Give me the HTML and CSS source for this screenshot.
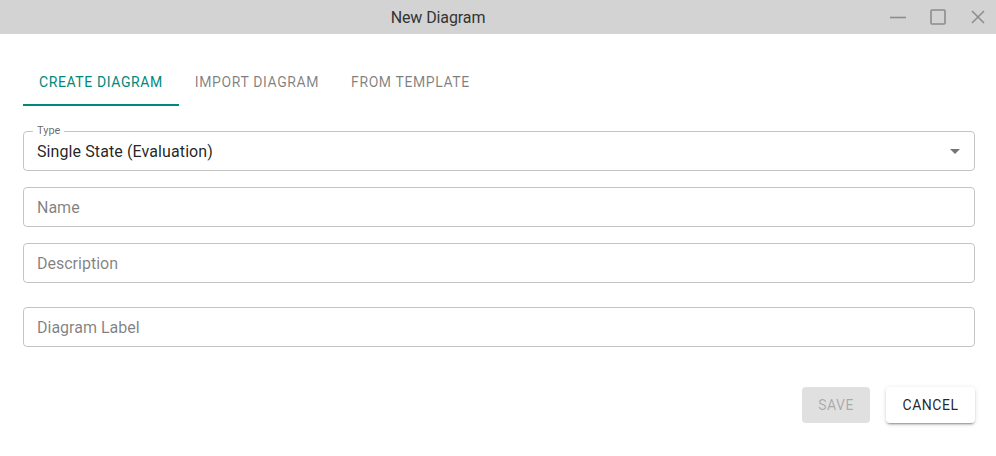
FILE: index.html
```html
<!DOCTYPE html>
<html>
<head>
<meta charset="utf-8">
<link rel="stylesheet" href="styles.css">
</head>
<body>
<div class="window">
  <div class="titlebar">
    <div class="title">New Diagram</div>
    <div class="controls">
      <svg class="ctl" width="18" height="18" viewBox="0 0 18 18"><path d="M1 9.5H17" stroke="#8c8c8c" stroke-width="1.6" fill="none"/></svg>
      <svg class="ctl" width="18" height="18" viewBox="0 0 18 18"><rect x="2" y="2" width="14" height="14" rx="1" stroke="#8c8c8c" stroke-width="1.6" fill="none"/></svg>
      <svg class="ctl" width="18" height="18" viewBox="0 0 18 18"><path d="M3 3L15 15M15 3L3 15" stroke="#8c8c8c" stroke-width="1.5" fill="none"/></svg>
    </div>
  </div>
  <div class="content">
    <div class="tabs">
      <div class="tab active">Create Diagram</div>
      <div class="tab">Import Diagram</div>
      <div class="tab">From Template</div>
    </div>
    <div class="form">
      <div class="field select first">
        <span class="legend">Type</span>
        <span class="value">Single State (Evaluation)</span>
        <svg class="arrow" width="24" height="24" viewBox="0 0 24 24"><path d="M7 10l5 5 5-5z" fill="#757575"/></svg>
      </div>
      <div class="field"><span class="placeholder">Name</span></div>
      <div class="field"><span class="placeholder">Description</span></div>
      <div class="field wide-gap"><span class="placeholder">Diagram Label</span></div>
    </div>
    <div class="actions">
      <button class="btn disabled">Save</button>
      <button class="btn raised">Cancel</button>
    </div>
  </div>
</div>
</body>
</html>
```
FILE: styles.css
```css
* { box-sizing: border-box; }
html, body { margin: 0; padding: 0; background: #fff; }
body { font-family: Roboto, "Liberation Sans", Arial, sans-serif; width: 996px; height: 456px; overflow: hidden; }

.titlebar {
  height: 34px;
  background: #d3d3d3;
  display: flex;
  align-items: center;
  justify-content: center;
  position: relative;
}
.title {
  font-size: 16px;
  color: #333;
  margin-left: -120px;
  letter-spacing: -0.1px;
}
.controls {
  position: absolute;
  right: 9px;
  top: 8px;
  display: flex;
  gap: 22px;
}
.ctl { display: block; }

.content { padding: 24px 21px 0 23px; }

.tabs { display: flex; height: 48px; }
.tab {
  font-size: 14px;
  text-transform: uppercase;
  letter-spacing: 0.6px;
  color: rgba(0,0,0,0.5);
  padding: 0 16px;
  display: flex;
  align-items: center;
  justify-content: center;
  min-width: 90px;
  border-bottom: 2px solid transparent;
  padding-top: 2px;
}
.tab.active { color: #00897b; border-bottom-color: #00897b; }

.form { display: flex; flex-direction: column; }
.field {
  position: relative;
  height: 40px;
  border: 1px solid #c4c4c4;
  border-radius: 4px;
  display: flex;
  align-items: center;
  padding: 0 14px 0 13px;
  font-size: 16px;
  margin-top: 16px;
}
.field.first { margin-top: 25px; }
.field.wide-gap { margin-top: 24px; }
.legend {
  position: absolute;
  left: 9px;
  top: -8px;
  font-size: 11px;
  line-height: 14px;
  padding: 0 4px;
  background: #fff;
  color: rgba(0,0,0,0.6);
}
.value { color: rgba(0,0,0,0.87); letter-spacing: 0.1px; }
.placeholder { color: rgba(0,0,0,0.5); }
.arrow { position: absolute; right: 7px; top: 7px; }

.actions {
  display: flex;
  justify-content: flex-end;
  gap: 16px;
  margin-top: 40px;
}
.btn {
  font-family: Roboto, "Liberation Sans", Arial, sans-serif;
  font-size: 14px;
  text-transform: uppercase;
  letter-spacing: 0.5px;
  height: 36px;
  padding: 0 8px;
  border: none;
  border-radius: 4px;
}
.btn.disabled { background: #e0e0e0; color: rgba(0,0,0,0.26); width: 68px; }
.btn.raised {
  background: #fff;
  color: rgba(0,0,0,0.87);
  width: 89px;
  box-shadow: 0 3px 1px -2px rgba(0,0,0,0.2), 0 2px 2px 0 rgba(0,0,0,0.14), 0 1px 5px 0 rgba(0,0,0,0.12);
}
```
